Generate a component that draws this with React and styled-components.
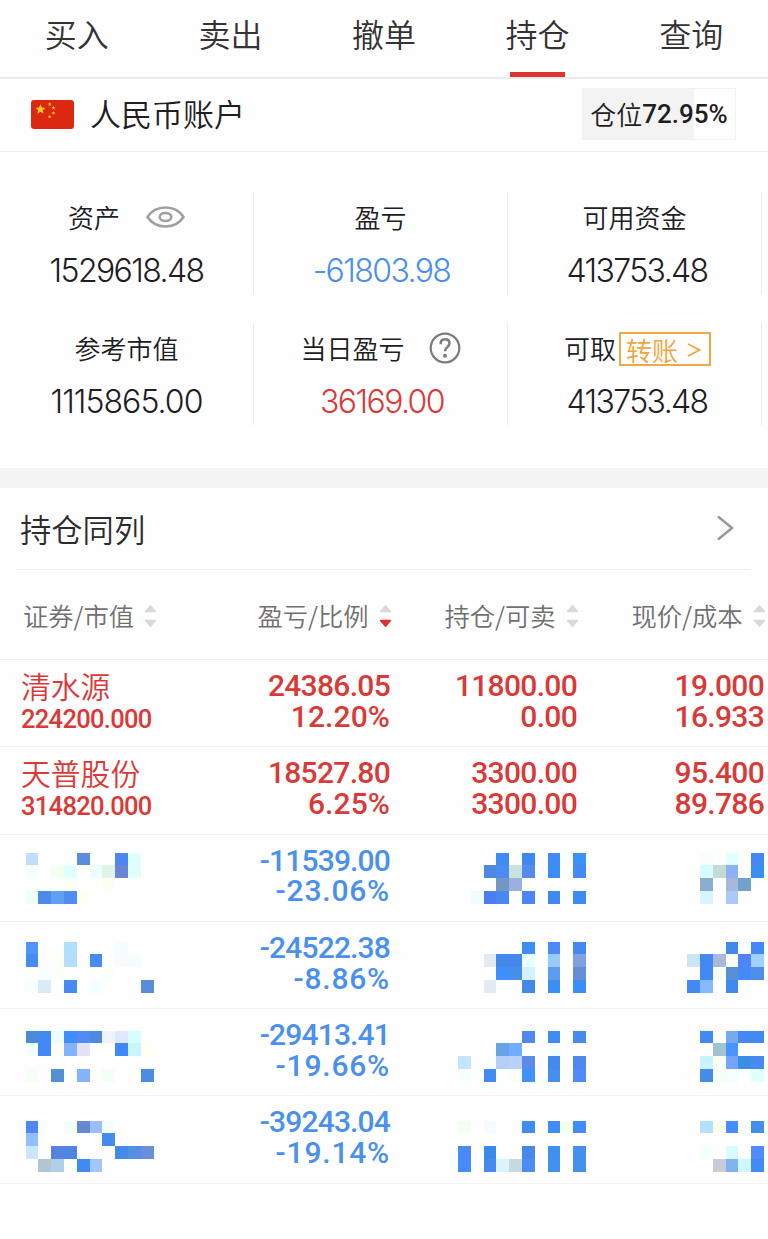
import styled, { createGlobalStyle, css } from "styled-components";

const GlobalStyle = createGlobalStyle`
  * {
    box-sizing: border-box;
  }
  body {
    margin: 0;
    background: #fefefe;
    color: #1d2023;
    font-family: "Noto Sans CJK SC", sans-serif;
    font-weight: 350;
  }
`;

const Page = styled.main`
  width: 768px;
  min-height: 1239px;
  overflow: hidden;
`;

const Tabs = styled.nav`
  display: grid;
  grid-template-columns: repeat(5, 1fr);
  height: 79px;
  border-bottom: 2px solid #ebebeb;
`;

const Tab = styled.a`
  display: flex;
  flex-direction: column;
  align-items: center;
  justify-content: space-between;
  color: #333;
  font-size: 32px;
  line-height: 67px;
  &::after {
    content: "";
    width: 55px;
    height: 5px;
    background: ${(p) => (p.$active ? "#db3535" : "transparent")};
  }
`;

const Account = styled.header`
  display: flex;
  align-items: center;
  height: 73px;
  padding: 0 32px 2px 31px;
  border-bottom: 1px solid #efefef;
`;

const AccountName = styled.h1`
  flex: 1;
  margin: -3px 0 0 16px;
  font-size: 31px;
  font-weight: 350;
  line-height: 44px;
`;

const Position = styled.div`
  display: flex;
  align-items: center;
  justify-content: center;
  width: 154px;
  height: 52px;
  border: 1px solid #f1f1f1;
  background: linear-gradient(to right, #f3f3f3 72.95%, transparent 72.95%);
  font-size: 26px;
  line-height: 48px;
  span {
    font-family: Roboto, sans-serif;
    font-weight: 460;
  }
`;

const Summary = styled.section`
  display: grid;
  grid-template-columns: 254px 254px 254px;
  row-gap: 29px;
  padding: 40px 0 43px;
`;

const Figure = styled.div`
  display: flex;
  flex-direction: column;
  align-items: center;
  height: 102px;
  border-right: 1px solid #ececec;
`;

const FigureLabel = styled.div`
  display: flex;
  align-items: center;
  height: 50px;
  font-size: 26px;
  line-height: 50px;
  white-space: nowrap;
  > svg {
    flex: none;
    margin: 0 0 1px ${(p) => p.$iconGap || 0}px;
  }
`;

const tones = {
  up: "#d93a38",
  down: "#4990ef",
  plain: "#1d2023",
};

const FigureValue = styled.div`
  padding-left: ${(p) => p.$shift || 0}px;
  color: ${(p) => tones[p.$tone]};
  font-family: Inter, sans-serif;
  font-size: 32px;
  font-weight: 360;
  line-height: 58px;
  letter-spacing: ${(p) => p.$tracking || -1.6}px;
`;

const Transfer = styled.button`
  display: flex;
  align-items: center;
  gap: 9px;
  width: 92px;
  height: 34px;
  margin: 1px -6px 0 3px;
  padding: 3px 0 0 5px;
  border: 2px solid #f0aa45;
  background: none;
  color: #f2a53a;
  font: inherit;
  line-height: 30px;
`;

const Band = styled.div`
  height: 20px;
  background: #f4f4f4;
`;

const SectionTitle = styled.h2`
  display: flex;
  align-items: center;
  justify-content: space-between;
  height: 82px;
  margin: 0 17px 0 16px;
  padding: 0 17px 1px 4px;
  border-bottom: 1px solid #ededed;
  color: #2c2c2c;
  font-size: 31.3px;
  font-weight: 350;
`;

const rowGrid = css`
  display: grid;
  grid-template-columns: 202px 188px 187px 187px;
`;

const HeadRow = styled.div`
  ${rowGrid}
  height: 90px;
  border-bottom: 1px solid #efefef;
  line-height: 88px;
`;

const HeadCell = styled.div`
  display: flex;
  align-items: center;
  justify-content: ${(p) => (p.$first ? "flex-start" : "flex-end")};
  gap: 10px;
  margin-right: -1.5px;
  padding-left: ${(p) => (p.$first ? "23px" : 0)};
  color: #707070;
  font-size: 25.3px;
  white-space: nowrap;
  svg {
    margin-top: 2px;
  }
`;

const Row = styled.div`
  ${rowGrid}
  height: 87.3px;
  border-bottom: 1px solid #f1f1f1;
`;

const Cell = styled.div`
  padding-top: 11px;
  color: ${(p) => tones[p.$tone]};
  font-family: Roboto, sans-serif;
  font-size: 30px;
  font-weight: 460;
  line-height: 30.7px;
  text-align: right;
`;

const Amount = styled.div`
  letter-spacing: ${(p) => p.$tracking}px;
`;

const Stock = styled.div`
  padding: 9px 0 0 21px;
  color: ${tones.up};
`;

const StockName = styled.div`
  font-size: 29.8px;
  line-height: 32px;
`;

const StockValue = styled.div`
  font-family: Roboto, sans-serif;
  font-size: 25.5px;
  font-weight: 460;
  line-height: 36px;
  letter-spacing: -0.7px;
`;

const Mosaic = styled.div`
  display: grid;
  grid-template-columns: repeat(${(p) => p.$cols}, 12.8px);
  grid-auto-rows: 12.8px;
  align-self: start;
  justify-self: ${(p) => (p.$left ? "start" : "end")};
  margin-top: ${(p) => p.$top}px;
  margin-left: ${(p) => p.$left || 0}px;
  margin-right: ${(p) => p.$right || 0}px;
`;

const Tile = styled.i`
  background: ${(p) => p.$color};
`;

const figures = [
  { label: "资产", value: "1529618.48", tone: "plain", icon: "eye" },
  { label: "盈亏", value: "-61803.98", tone: "down", shift: 2 },
  { label: "可用资金", value: "413753.48", tone: "plain", shift: 5 },
  { label: "参考市值", value: "1115865.00", tone: "plain", tracking: -0.95 },
  { label: "当日盈亏", value: "36169.00", tone: "up", icon: "help", shift: 3 },
  { label: "可取", value: "413753.48", tone: "plain", transfer: true, shift: 5 },
];

const columns = [
  { label: "证券/市值" },
  { label: "盈亏/比例", sorted: true },
  { label: "持仓/可卖" },
  { label: "现价/成本" },
];

const holdings = [
  {
    name: "清水源",
    worth: "224200.000",
    cells: [["24386.05", "12.20%"], ["11800.00", "0.00"], ["19.000", "16.933"]],
  },
  {
    name: "天普股份",
    worth: "314820.000",
    cells: [["18527.80", "6.25%"], ["3300.00", "3300.00"], ["95.400", "89.786"]],
  },
];

// masked holdings, one string per tile row, "." is an empty tile
const masked = [
  {
    top: 18,
    profit: ["-11539.00", "-23.06%"],
    name: [
      "c2defc . . . 5a8edb . . 4f87f2 defffe .",
      "f8fefe . f6fef4 e0fffe . ecfffe e2f4e8 6886d8 e0fffc .",
      ". . . fafff6 . . fdfdf4 . . .",
      "eeffff 4f8aea 60a0f0 4f8cf4 fefef4 . . . . .",
    ],
    amount: [
      ". . . 3f8cf4 . 4088ee . 428af8 . 3a92fa",
      ". . 4c8ae2 4a8cf0 c8e4dc 578af0 . 3a8ef4 . 468af4",
      ". . . 7496c4 9cb0e0 . . . . .",
      ". f2fcff 4c7ef2 4888f4 . 4a86f6 . 3f8af2 . 3f8af4",
    ],
    price: [
      ". f8fff8 . e0ffff . 4488f8",
      ". d8fcff c0dcd4 90b0f6 . 3a90f2",
      ". 8cacd2 . a8b8da 70a2cc .",
      ". d8f4ff . acc8f4 . .",
    ],
  },
  {
    top: 19.7,
    profit: ["-24522.38", "-8.86%"],
    name: [
      "4f96fb . . aee0fe . . . f2feff . .",
      "478cf2 . fafff8 b4defc . 468cf8 . fafafa f6fcff .",
      ". f6feff fafff8 . . . fafff8 . . .",
      "f8ffff d9ebf6 . 468af4 . f0ffff . . . 5a8cdc",
    ],
    amount: [
      ". . . . . 3f8ef4 . 4c8af8 . 4488f4",
      ". . e4eaf2 4488ec 4488ec e6ffff . 98ccff . 80a0e0",
      ". . . 3f8eff 4490e8 d6f2ff . 5c9eee . 668ed6",
      ". . e2eaf4 . . 4488ea . 3a90f2 . 3a8cfa",
    ],
    price: [
      ". . . 4088ec . 4488f8",
      "cae6f6 4488f4 acb8da fefef6 4f84fa a0d2ff",
      ". 4488f8 f6fff6 5890d4 468afa 4c90ea",
      "4488f4 86baff . 3f8af2 . .",
    ],
  },
  {
    top: 21.4,
    profit: ["-29413.41", "-19.66%"],
    name: [
      "4c8cd4 4488f2 ecfffe 3f8eff 528af6 4f8ae0 f0f4fa dfe8fc d4feff .",
      "f6ffff 4488f8 fefef4 84b4ff e6e2f6 . . 3f88fa c8f6ff fffff4",
      ". . . . . . . . . .",
      "f6fff4 . 4f90d6 . 84b2ff . f2fff4 . . 4c8ce2",
    ],
    amount: [
      ". . . . . 4f88ee . 3f8cf4 . 468cf0",
      ". . . 66a4e6 70acff . . f2fffa . .",
      "c6e4ff . . b4cef8 b8d2fc 5c8ae4 . 448aea . 5088ee",
      "f6fff8 . 3f8cf2 . f8fff4 3f92fa . 4490ee . 4c8cff",
    ],
    price: [
      ". 4488f4 . 76aaee 4488f4 4488f4",
      ". . a0c4d0 4894ff . .",
      ". c8f4ff f8fff4 74a4ff 3590e6 4a8af0",
      ". 488cea f6fff6 f4ffff . e0ffff",
    ],
  },
  {
    top: 24.2,
    profit: ["-39243.04", "-19.14%"],
    name: [
      "4f88f0 . . f4fffa 6389d0 9abefc f4fffc . . .",
      "92befe . . . . . 448cee . . .",
      "cce6ff . 5584de 4c86e2 . . . 448ae8 5490e2 6890da",
      ". b2c6d2 b0cfe8 . 3f8af4 a0c8ff . . . .",
    ],
    amount: [
      "f2fff2 . f4fcff . . 3f8cf4 . 3f8cf4 f6ffec 3f8cfa",
      ". . . . . . . . . .",
      "4c88f6 . 3a8aee . . 4888ea . 3f90f0 . 4490ee",
      "468cff . 448af0 d8f4fc c8d8e0 4c8cf6 . 4490ee . 4490ee",
    ],
    price: [
      ". b4e0ff f8ffec 458eff . 448eee",
      ". . . . . .",
      ". f4ffff . dafcff . 508cff",
      ". . c8ccd8 80b2f0 d0f6ff 3f8cf4",
    ],
  },
];

const star = (cx, cy, r) =>
  Array.from({ length: 10 }, (_, i) => {
    const a = (Math.PI / 5) * i - Math.PI / 2;
    const d = i % 2 ? r * 0.45 : r;
    return `${cx + d * Math.cos(a)},${cy + d * Math.sin(a)}`;
  }).join(" ");

// percentages are set wider than plain amounts
const tracking = (value) => {
  if (value.endsWith("%")) return value.startsWith("-") ? 0.8 : 0.1;
  return value.startsWith("-") ? -0.85 : -0.7;
};

function Flag() {
  return (
    <svg width="43" height="29" viewBox="0 0 43 29">
      <rect width="43" height="29" rx="3" fill="#dc2810" />
      <g fill="#ffc81c">
        <polygon points={star(9.5, 9.5, 5.2)} />
        <polygon points={star(18.7, 4.3, 2)} />
        <polygon points={star(22.5, 7.8, 2)} />
        <polygon points={star(22.5, 13, 2)} />
        <polygon points={star(18.7, 16.7, 2)} />
      </g>
    </svg>
  );
}

function Eye() {
  return (
    <svg width="39" height="22" viewBox="0 0 39 22" fill="none" stroke="#a0a0a0" strokeWidth="2.6">
      <path d="M1.5 11C5.5 4.8 11.5 1.5 19.5 1.5S33.5 4.8 37.5 11C33.5 17.2 27.5 20.5 19.5 20.5S5.5 17.2 1.5 11Z" />
      <ellipse cx="19.5" cy="11" rx="5.8" ry="4" />
    </svg>
  );
}

function Help() {
  return (
    <svg width="32" height="32" viewBox="0 0 32 32" fill="none" stroke="#7c7c7c" strokeWidth="2.2">
      <circle cx="16" cy="16" r="14.3" />
      <path d="M11.6 12.2C11.6 9 13.3 7.3 16 7.3S20.5 9 20.5 11.5C20.5 14.6 16 15.2 16 19.3" strokeWidth="2.5" />
      <circle cx="16" cy="23.7" r="2" fill="#7c7c7c" stroke="none" />
    </svg>
  );
}

function Chevron() {
  return (
    <svg width="17" height="26" viewBox="0 0 17 26" fill="none" stroke="#999" strokeWidth="2.6">
      <path d="M1 1.5L15 13L1 24.5" />
    </svg>
  );
}

function Sorter({ sorted }) {
  return (
    <svg width="13" height="24" viewBox="0 0 13 24" strokeLinejoin="round">
      <path d="M1.5 7.5L6.5 1.7L11.5 7.5Z" fill="#d9d9d9" stroke="#d9d9d9" strokeWidth="1.4" />
      <path
        d="M1.5 16.5L6.5 22.3L11.5 16.5Z"
        fill={sorted ? "#e03230" : "#d9d9d9"}
        stroke={sorted ? "#e03230" : "#d9d9d9"}
        strokeWidth="1.4"
      />
    </svg>
  );
}

function Masked({ tiles, ...place }) {
  const rows = tiles.map((line) => line.split(" "));
  return (
    <Mosaic $cols={rows[0].length} {...place}>
      {rows.flat().map((color, i) => (
        <Tile key={i} $color={color === "." ? "transparent" : `#${color}`} />
      ))}
    </Mosaic>
  );
}

function Pair({ values, tone }) {
  return (
    <Cell $tone={tone}>
      {values.map((value, i) => (
        <Amount key={i} $tracking={tracking(value)}>
          {value}
        </Amount>
      ))}
    </Cell>
  );
}

export default function App() {
  return (
    <Page>
      <GlobalStyle />
      <Tabs>
        {["买入", "卖出", "撤单", "持仓", "查询"].map((tab) => (
          <Tab key={tab} $active={tab === "持仓"}>
            {tab}
          </Tab>
        ))}
      </Tabs>
      <Account>
        <Flag />
        <AccountName>人民币账户</AccountName>
        <Position>
          仓位<span>72.95%</span>
        </Position>
      </Account>
      <Summary>
        {figures.map((item) => (
          <Figure key={item.label}>
            <FigureLabel $iconGap={item.icon === "eye" ? 26 : 24}>
              {item.label}
              {item.icon === "eye" && <Eye />}
              {item.icon === "help" && <Help />}
              {item.transfer && (
                <Transfer>
                  转账
                  <svg width="14" height="14" viewBox="0 0 14 14" fill="none" stroke="#f2a53a" strokeWidth="1.8">
                    <path d="M1 1L12.5 7L1 13" />
                  </svg>
                </Transfer>
              )}
            </FigureLabel>
            <FigureValue $tone={item.tone} $tracking={item.tracking} $shift={item.shift}>
              {item.value}
            </FigureValue>
          </Figure>
        ))}
      </Summary>
      <Band />
      <SectionTitle>
        持仓同列
        <Chevron />
      </SectionTitle>
      <HeadRow>
        {columns.map((col, i) => (
          <HeadCell key={col.label} $first={i === 0}>
            {col.label}
            <Sorter sorted={col.sorted} />
          </HeadCell>
        ))}
      </HeadRow>
      {holdings.map((item) => (
        <Row key={item.name}>
          <Stock>
            <StockName>{item.name}</StockName>
            <StockValue>{item.worth}</StockValue>
          </Stock>
          {item.cells.map((values, i) => (
            <Pair key={i} values={values} tone="up" />
          ))}
        </Row>
      ))}
      {masked.map((item) => (
        <Row key={item.profit[0]}>
          <Masked tiles={item.name} $top={item.top} $left={25.6} />
          <Pair values={item.profit} tone="down" />
          <Masked tiles={item.amount} $top={item.top} $right={-9} />
          <Masked tiles={item.price} $top={item.top} />
        </Row>
      ))}
    </Page>
  );
}
